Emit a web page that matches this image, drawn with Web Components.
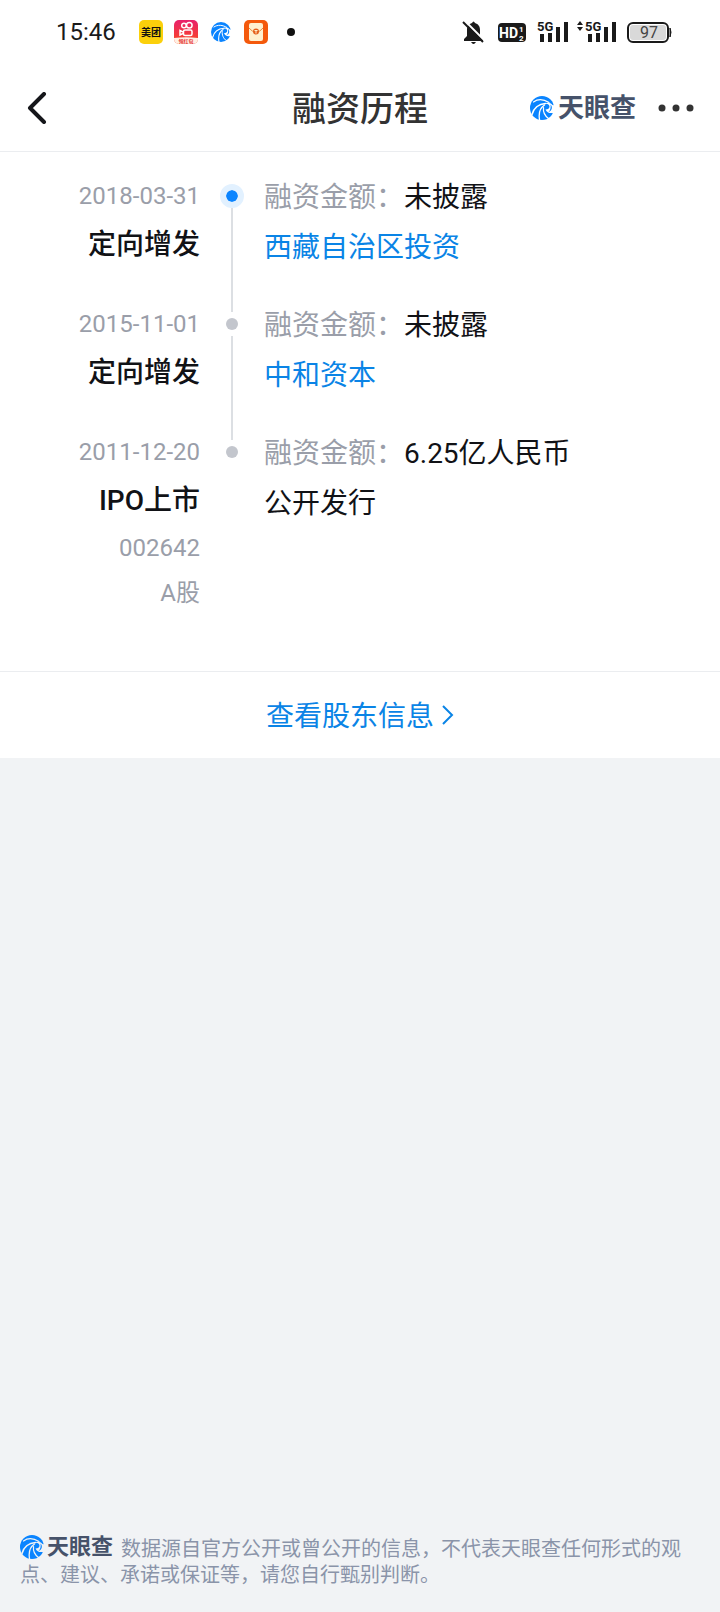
<!DOCTYPE html>
<html lang="zh-CN">
<head>
<meta charset="utf-8">
<meta name="viewport" content="width=device-width, initial-scale=1">
<title>融资历程</title>
<style>
html, body { margin: 0; min-height: 100vh; }
body {
  font-family: Roboto, "Noto Sans CJK SC", sans-serif;
  background: #f1f3f5;
  color: #111216;
  display: flex;
}
financing-page { flex: 1; min-width: 0; }
</style>
</head>
<body>
<financing-page></financing-page>
<script>
const define = (name, html) => {
  const template = document.createElement('template');
  template.innerHTML = html;
  customElements.define(name, class extends HTMLElement {
    constructor() {
      super();
      this.attachShadow({ mode: 'open' }).append(template.content.cloneNode(true));
    }
  });
};

define('swirl-mark', `
<style>
:host { display: inline-block; width: 24px; height: 24px; flex: none; }
svg { display: block; width: 100%; height: 100%; }
.hole { fill: var(--mark-bg, #fff); }
.cut { fill: none; stroke: var(--mark-bg, #fff); stroke-linecap: round; }
</style>
<svg viewBox="0 0 24 24" aria-hidden="true">
  <circle cx="12" cy="12" r="12" fill="#0a84ff"/>
  <path class="hole" d="M25 9.500L22.500 9C20.500 6.500 17.500 6 14 7.500C17.500 7.500 19.500 8.500 19.500 10.500C19.500 12.500 18 13.500 15.500 13.500C17 16.500 19.500 17.500 22 17L25 18Z"/>
  <path fill="#0a84ff" d="M20.500 8.500C23 11 22 15 18.500 16C20.500 14 21 11.500 20.500 8.500Z"/>
  <path class="cut" stroke-width="1.200" d="M3.500 6C8 2.800 14 3.500 19 6.500"/>
  <path class="cut" stroke-width="1.500" d="M2 18.500C3.500 12.500 8.500 8 15.500 7.500"/>
  <path class="cut" stroke-width="1.300" d="M9.500 23.500C8.500 17.500 10 12 14.500 9"/>
  <path class="cut" stroke-width="1.200" d="M18.500 22.500C14.500 19.500 13 15.500 13.500 11.500"/>
</svg>`);

define('brand-logo', `
<style>
:host { display: inline-flex; align-items: center; gap: 4px; color: #46526a; font-weight: 700; }
</style>
<swirl-mark></swirl-mark><span>天眼查</span>`);

define('status-bar', `
<style>
:host { display: flex; align-items: center; justify-content: space-between; height: 64px; padding: 0 48px 0 56px; color: #1a1a1a; }
.side { display: flex; align-items: center; }
time { font-size: 24px; line-height: 32px; margin-right: 23px; }
.apps { gap: 11px; display: flex; align-items: center; }
.apps svg { display: block; }
.apps swirl-mark { width: 20px; height: 20px; margin: 0 2px; }
.dot { width: 8px; height: 8px; border-radius: 50%; background: #111; margin-left: 8px; }
.signals svg { display: block; }
text { font-family: Roboto, "Noto Sans CJK SC", sans-serif; }
</style>
<div class="side">
  <time>15:46</time>
  <div class="apps">
    <svg width="24" height="24" viewBox="0 0 24 24"><rect width="24" height="24" rx="5" fill="#fbd00b"/><text x="12" y="16" font-size="10" font-weight="700" text-anchor="middle" fill="#111">美团</text></svg>
    <svg width="24" height="24" viewBox="0 0 24 24">
      <defs><linearGradient id="g" x1="0" y1="0" x2="0" y2="1"><stop offset="0" stop-color="#e8206c"/><stop offset="1" stop-color="#fb4a1e"/></linearGradient></defs>
      <rect width="24" height="24" rx="5" fill="url(#g)"/>
      <path d="M0 18Q12 16.500 24 18V19A5 5 0 0 1 19 24H5A5 5 0 0 1 0 19Z" fill="#fff0e4"/>
      <g fill="none" stroke="#fff" stroke-width="1.500"><circle cx="10" cy="5.500" r="2.300"/><circle cx="15.300" cy="5.200" r="2.800"/><rect x="9.500" y="10" width="8.500" height="5.500" rx="1.500"/><path d="M9 12L6 10.500V15L9 13.500"/></g>
      <text x="12" y="23" font-size="5" font-weight="700" text-anchor="middle" fill="#e52c2c">领红包</text>
    </svg>
    <swirl-mark></swirl-mark>
    <svg width="24" height="24" viewBox="0 0 24 24"><rect width="24" height="24" rx="5" fill="#f4590c"/><rect x="5" y="3" width="14" height="18" rx="2" fill="#fff0cf"/><path d="M5 8Q8 12 12 12T19 8" fill="none" stroke="#e98a3c"/><circle cx="12" cy="11.500" r="3" fill="#e5601c"/><path d="M10.500 10.500H13.500M12 10.500V13.500" stroke="#fff0cf"/></svg>
    <span class="dot"></span>
  </div>
</div>
<div class="side signals">
  <svg width="212" height="32" viewBox="460 16 212 32" fill="#1a1a1a">
    <path d="M464 41V39L467 36V30C467 26 469 24 472 23Q473.500 20 475 23C478 24 480 26 480 30V36L483 39V41ZM471 42H476Q473.500 46 471 42Z"/>
    <path d="M464 20L485 41" stroke="#fff" stroke-width="2"/><path d="M463 22L483 42" stroke="#1a1a1a" stroke-width="2"/>
    <rect x="498" y="23" width="28" height="19" rx="4"/>
    <text x="499" y="38" font-size="14" font-weight="700" fill="#fff">HD</text>
    <text x="519" y="32" font-size="8" font-weight="700" fill="#fff">1</text>
    <text x="519" y="41" font-size="8" font-weight="700" fill="#fff">2</text>
    <text x="537" y="31" font-size="13" font-weight="700">5G</text>
    <path d="M540 34h4v8h-4zM548 33h4v9h-4zM556 27h4v15h-4zM564 22h4v20h-4z"/>
    <path d="M577 25L580 21L583 25ZM577 27H583L580 31Z"/>
    <text x="585" y="31" font-size="13" font-weight="700">5G</text>
    <path d="M588 34h4v8h-4zM596 33h4v9h-4zM604 27h4v15h-4zM612 22h4v20h-4z"/>
    <rect x="628" y="23" width="40" height="19" rx="5" fill="#fff" stroke="#1a1a1a" stroke-width="2"/>
    <rect x="630" y="25" width="36" height="15" rx="3" fill="#d9d9d9"/>
    <path d="M670 28Q672 32 670 37Z" stroke="#1a1a1a"/>
    <text x="649" y="38" font-size="16" text-anchor="middle" fill="#444">97</text>
  </svg>
</div>`);

define('nav-bar', `
<style>
:host { display: grid; grid-template-columns: 1fr auto 1fr; align-items: center; height: 87px; padding: 0 24px; border-bottom: 1px solid #ebedf0; }
button { border: 0; padding: 0; background: none; display: block; }
svg { display: block; }
h1 { margin: 0; padding-top: 2px; font-size: 34px; line-height: 48px; font-weight: 500; color: #333; }
.end { display: flex; justify-content: flex-end; align-items: center; gap: 22px; }
brand-logo { font-size: 26px; line-height: 32px; }
</style>
<button aria-label="返回"><svg width="24" height="32" viewBox="0 0 24 32"><path d="M20 2L6 16L20 30" fill="none" stroke="#15161a" stroke-width="4" stroke-linecap="round" stroke-linejoin="round"/></svg></button>
<h1><slot></slot></h1>
<div class="end"><brand-logo></brand-logo>
<button aria-label="更多"><svg width="38" height="32" viewBox="0 0 38 32" fill="#333"><circle cx="4" cy="16" r="3.500"/><circle cx="18" cy="16" r="3.500"/><circle cx="32" cy="16" r="3.500"/></svg></button></div>`);

define('timeline-item', `
<style>
:host { display: grid; grid-template-columns: 200px 64px 1fr; min-height: 128px; }
.left { text-align: right; }
.left, .right { display: flex; flex-direction: column; }
.rail { display: flex; flex-direction: column; align-items: center; padding-top: 12px; }
.dot { width: 12px; height: 12px; border: 6px solid transparent; border-radius: 50%; background: #c3c6cd; background-clip: padding-box; flex: none; }
:host([current]) .dot { background-color: #0a84ff; border-color: #e2f1ff; }
.line { width: 2px; flex: 1; margin-bottom: -12px; background: #dcdfe3; }
:host([last]) .line { display: none; }
.date { font-size: 24px; line-height: 48px; color: #9a9ea9; }
.round { font-size: 28px; line-height: 50px; font-weight: 500; }
::slotted([slot="note"]) { font-size: 24px; line-height: 45px; color: #9a9ea9; }
.right { font-size: 28px; line-height: 50px; padding-top: 1px; }
.label { color: #9a9ea9; }
</style>
<div class="left"><slot class="date" name="date"></slot><slot class="round" name="round"></slot><slot name="note"></slot></div>
<div class="rail"><span class="dot"></span><span class="line"></span></div>
<div class="right"><div><span class="label">融资金额：</span><slot name="amount"></slot></div><div><slot></slot></div></div>`);

define('page-disclaimer', `
<style>
:host { display: block; padding: 20px 20px 24px; font-size: 20px; line-height: 26px; color: #8a94a9; --mark-bg: #f1f3f5; }
p { margin: 0; }
brand-logo { font-size: 22px; line-height: 24px; gap: 3px; margin-right: 8px; vertical-align: top; height: 22px; }
</style>
<p><brand-logo></brand-logo><slot></slot></p>`);

define('financing-page', `
<style>
:host { display: flex; flex-direction: column; }
.top { background: #fff; }
.timeline { padding: 20px 0 55px; }
.timeline a, .more { color: #0a84e6; text-decoration: none; }
.more { display: flex; align-items: center; justify-content: center; gap: 8px; border-top: 1px solid #ebedf0; padding: 23px 0; font-size: 28px; line-height: 40px; }
.more span { padding-top: 2px; margin-bottom: -2px; }
page-disclaimer { margin-top: auto; }
time, .timeline span, .timeline strong { display: block; font-weight: inherit; }
.timeline span[slot="amount"] { display: inline; }
</style>
<div class="top">
  <status-bar></status-bar>
  <nav-bar>融资历程</nav-bar>
  <main>
    <div class="timeline">
      <timeline-item current><time slot="date">2018-03-31</time><strong slot="round">定向增发</strong><span slot="amount">未披露</span><a href="#xizang">西藏自治区投资</a></timeline-item>
      <timeline-item><time slot="date">2015-11-01</time><strong slot="round">定向增发</strong><span slot="amount">未披露</span><a href="#zhonghe">中和资本</a></timeline-item>
      <timeline-item last><time slot="date">2011-12-20</time><strong slot="round">IPO上市</strong><span slot="note">002642</span><span slot="note">A股</span><span slot="amount">6.25亿人民币</span>公开发行</timeline-item>
    </div>
    <a class="more" href="#shareholders"><span>查看股东信息</span><svg width="12" height="20" viewBox="0 0 12 20" aria-hidden="true"><path d="M1 1L10 10L1 19" fill="none" stroke="currentColor" stroke-width="2"/></svg></a>
  </main>
</div>
<page-disclaimer>数据源自官方公开或曾公开的信息，不代表天眼查任何形式的观点、建议、承诺或保证等，请您自行甄别判断。</page-disclaimer>`);
</script>
</body>
</html>
